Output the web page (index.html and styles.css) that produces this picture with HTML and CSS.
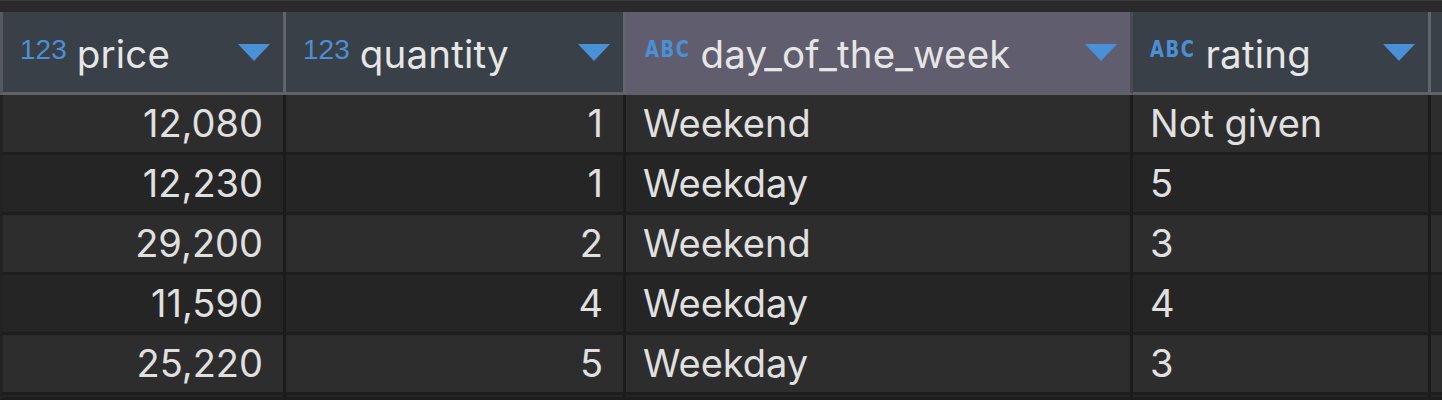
FILE: index.html
```html
<!DOCTYPE html>
<html>
<head>
<meta charset="utf-8">
<link rel="stylesheet" href="styles.css">
</head>
<body>
<div class="topbar"></div>
<div class="grid">
  <div class="hcell first"><span class="type num">123</span><span class="name">price</span><svg class="tri" viewBox="0 0 32 17"><path d="M0 0H32L16 17Z"/></svg></div>
  <div class="hcell"><span class="type num">123</span><span class="name">quantity</span><svg class="tri" viewBox="0 0 32 17"><path d="M0 0H32L16 17Z"/></svg></div>
  <div class="hcell sel"><span class="type abc">ABC</span><span class="name">day_of_the_week</span><svg class="tri" viewBox="0 0 32 17"><path d="M0 0H32L16 17Z"/></svg></div>
  <div class="hcell"><span class="type abc">ABC</span><span class="name">rating</span><svg class="tri" viewBox="0 0 32 17"><path d="M0 0H32L16 17Z"/></svg></div>
  <div class="hcell last"></div>

  <div class="cell first r odd">12,080</div><div class="cell r odd">1</div><div class="cell odd">Weekend</div><div class="cell odd">Not given</div><div class="cell last odd"></div>
  <div class="cell first r">12,230</div><div class="cell r">1</div><div class="cell">Weekday</div><div class="cell">5</div><div class="cell last"></div>
  <div class="cell first r odd">29,200</div><div class="cell r odd">2</div><div class="cell odd">Weekend</div><div class="cell odd">3</div><div class="cell last odd"></div>
  <div class="cell first r">11,590</div><div class="cell r">4</div><div class="cell">Weekday</div><div class="cell">4</div><div class="cell last"></div>
  <div class="cell first r odd">25,220</div><div class="cell r odd">5</div><div class="cell odd">Weekday</div><div class="cell odd">3</div><div class="cell last odd"></div>
  <div class="cell first r"></div><div class="cell r"></div><div class="cell"></div><div class="cell"></div><div class="cell last"></div>
</div>
</body>
</html>
```
FILE: styles.css
```css
html, body {
  margin: 0;
  padding: 0;
  background: #262626;
  overflow: hidden;
  height: 400px;
}
body {
  font-family: Inter, "Liberation Sans", sans-serif;
  color: #e2e2e2;
}
.topbar {
  height: 12px;
  background: #2a2a2a;
  border-top: 1px solid #3a3a3a;
  box-sizing: border-box;
}
.grid {
  display: grid;
  grid-template-columns: 286px 340px 507px 298px 1fr;
  grid-template-rows: 83px repeat(5, 60px) 5px;
  overflow: hidden;
}
.hcell {
  box-sizing: border-box;
  background: #3a4047;
  border-right: 3px solid #62666b;
  border-bottom: 3px solid #5f6368;
  display: flex;
  align-items: center;
  padding: 3px 13px 0 17px;
  font-size: 38.5px;
  letter-spacing: 0.2px;
  color: #e6e6e6;
}
.hcell.first {
  border-left: 3px solid #565a5f;
}
.hcell.sel {
  background: #605e6e;
  border-right-color: #4a4a55;
  padding-left: 19px;
}
.hcell.last {
  border-right: none;
}
.type {
  color: #4a90d6;
  margin-right: 10px;
  position: relative;
  top: -4px;
  letter-spacing: 0;
}
.type.num {
  font-size: 28px;
  font-family: "Liberation Sans", sans-serif;
}
.type.abc {
  display: inline-block;
  font-family: "DejaVu Sans", sans-serif;
  font-weight: bold;
  font-size: 18px;
  letter-spacing: 1.5px;
  transform: scaleY(1.25);
  margin-right: 10px;
  top: -5px;
}
.name {
  flex: 1;
}
.tri {
  width: 32px;
  height: 17px;
  fill: #4a90d6;
  position: relative;
  top: -1px;
}
.cell {
  box-sizing: border-box;
  background: #252525;
  border-right: 3px solid #1b1b1b;
  border-bottom: 3px solid #1d1d1d;
  display: flex;
  align-items: center;
  padding: 0 17px 2px 17px;
  font-size: 38px;
  color: #e0e0e0;
  overflow: hidden;
}
.cell.odd {
  background: #2d2d2d;
}
.cell.first {
  border-left: 3px solid #222222;
}
.cell.r {
  justify-content: flex-end;
  padding-right: 20px;
}
.cell.last {
  border-right: none;
}
```
